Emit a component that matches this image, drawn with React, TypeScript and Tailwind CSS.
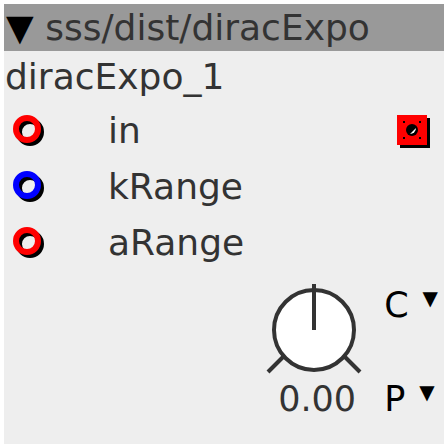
import React from "react";

const font = { fontFamily: '"DejaVu Sans", "Liberation Sans", sans-serif' };

function Port({ color }: { color: string }) {
  return (
    <div className="relative w-[32px] h-[32px]">
      <div className="absolute left-[3px] top-[3px] w-[28px] h-[28px] rounded-full border-[6px] border-black" />
      <div className="absolute left-0 top-0 w-[28px] h-[28px] rounded-full border-[6px]" style={{ borderColor: color }} />
    </div>
  );
}

export default function App() {
  return (
    <div className="p-[4px]" style={font}>
      <div className="w-[440px] h-[440px] bg-[#eeeeee] flex flex-col text-[#333333]">
        <div className="h-[47px] bg-[#999999] flex items-center pl-[2px] text-[36px] leading-none whitespace-nowrap">
          <span className="text-black">▼</span>
          <span>&nbsp;sss/dist/diracExpo</span>
        </div>
        <div className="h-[52px] flex items-center pl-[1px] text-[36px] leading-none">diracExpo_1</div>
        <div className="flex flex-col">
          {[
            ["in", "#ff0000"],
            ["kRange", "#0000ff"],
            ["aRange", "#ff0000"],
          ].map(([label, c], i) => (
            <div key={label} className="h-[56px] flex items-center">
              <div className="w-[104px] pl-[9px] flex items-center">
                <Port color={c} />
              </div>
              <span className="text-[36px] leading-none flex-1">{label}</span>
              {i === 0 && (
                <div className="relative w-[33px] h-[33px] mr-[14px]">
                  <div className="absolute left-[3px] top-[3px] w-[30px] h-[30px] bg-black" />
                  <svg className="absolute left-0 top-0" width="30" height="30" viewBox="0 0 30 30">
                    <rect width="30" height="30" fill="#ff0000" />
                    <circle cx="15" cy="15" r="6" fill="#000" />
                    <path d="M13 19 L19 13 A6 6 0 0 1 13 19 Z" fill="#fff" />
                    <rect x="6" y="6" width="2" height="2" fill="#000" />
                    <rect x="22" y="6" width="2" height="2" fill="#000" />
                    <rect x="6" y="22" width="2" height="2" fill="#000" />
                    <rect x="22" y="22" width="2" height="2" fill="#000" />
                  </svg>
                </div>
              )}
            </div>
          ))}
        </div>
        <div className="flex justify-end pr-[6px] mt-[13px]">
          <div className="flex flex-col items-center">
            <svg width="96" height="94" viewBox="0 0 96 94">
              <line x1="2" y1="88" x2="18" y2="72" stroke="#333" strokeWidth="4" />
              <line x1="94" y1="88" x2="78" y2="72" stroke="#333" strokeWidth="4" />
              <circle cx="48" cy="46" r="40" fill="#fff" stroke="#333" strokeWidth="4" />
              <line x1="48" y1="0" x2="48" y2="46" stroke="#333" strokeWidth="4" />
            </svg>
            <span className="text-[35px] leading-none mt-[4px] ml-[6px]">0.00</span>
          </div>
          <div className="flex flex-col justify-between ml-[22px] text-black pt-[4px]">
            <div className="flex items-start text-[35px] leading-none">
              C<span className="text-[20px] ml-[14px]">▼</span>
            </div>
            <div className="flex items-start text-[35px] leading-none">
              P<span className="text-[20px] ml-[14px]">▼</span>
            </div>
          </div>
        </div>
      </div>
    </div>
  );
}
